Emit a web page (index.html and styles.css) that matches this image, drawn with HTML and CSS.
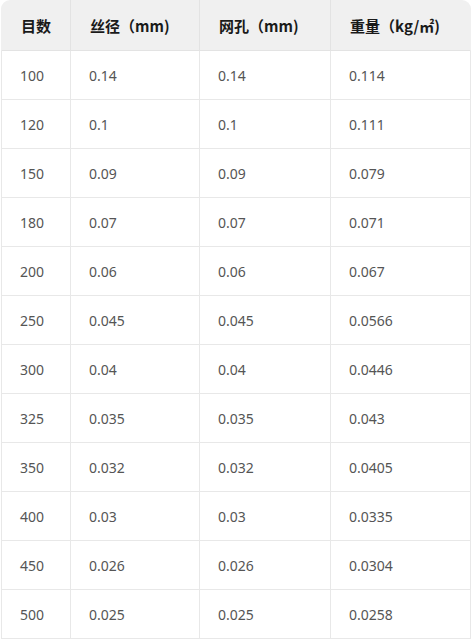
FILE: index.html
```html
<!DOCTYPE html>
<html lang="zh">
<head>
<meta charset="utf-8">
<link rel="stylesheet" href="styles.css">
</head>
<body>
<div class="wrap">
<table class="spec">
<colgroup><col class="c1"><col class="c2"><col class="c3"><col class="c4"></colgroup>
<thead>
<tr><th>目数</th><th>丝径（mm)</th><th>网孔（mm)</th><th>重量（kg/㎡)</th></tr>
</thead>
<tbody>
<tr><td>100</td><td>0.14</td><td>0.14</td><td>0.114</td></tr>
<tr><td>120</td><td>0.1</td><td>0.1</td><td>0.111</td></tr>
<tr><td>150</td><td>0.09</td><td>0.09</td><td>0.079</td></tr>
<tr><td>180</td><td>0.07</td><td>0.07</td><td>0.071</td></tr>
<tr><td>200</td><td>0.06</td><td>0.06</td><td>0.067</td></tr>
<tr><td>250</td><td>0.045</td><td>0.045</td><td>0.0566</td></tr>
<tr><td>300</td><td>0.04</td><td>0.04</td><td>0.0446</td></tr>
<tr><td>325</td><td>0.035</td><td>0.035</td><td>0.043</td></tr>
<tr><td>350</td><td>0.032</td><td>0.032</td><td>0.0405</td></tr>
<tr><td>400</td><td>0.03</td><td>0.03</td><td>0.0335</td></tr>
<tr><td>450</td><td>0.026</td><td>0.026</td><td>0.0304</td></tr>
<tr><td>500</td><td>0.025</td><td>0.025</td><td>0.0258</td></tr>
</tbody>
</table>
</div>
</body>
</html>
```
FILE: styles.css
```css
html, body {
  margin: 0;
  padding: 0;
  background: #fff;
}
.wrap {
  margin-left: 1px;
  width: 470px;
  border-radius: 9px 9px 0 0;
  overflow: hidden;
}
.spec {
  width: 470px;
  table-layout: fixed;
  border-collapse: separate;
  border-spacing: 0;
  font-family: "Noto Sans", "Noto Sans CJK SC", sans-serif;
}
.c1 { width: 70px; }
.c2 { width: 129px; }
.c3 { width: 131px; }
.c4 { width: 140px; }
.spec th {
  height: 51px;
  box-sizing: border-box;
  background: #f0f0f0;
  border-bottom: 1px solid #e3e3e3;
  border-right: 1px solid #e3e3e3;
  text-align: left;
  padding: 0 0 0 19px;
  font-size: 15px;
  font-weight: 700;
  color: #1a1a1a;
  font-family: "Noto Sans CJK SC", "Noto Sans", sans-serif;
}
.spec th:last-child { border-right: 1px solid transparent; }
.spec td {
  height: 49px;
  box-sizing: border-box;
  border-bottom: 1px solid #e8e8e8;
  border-right: 1px solid #e8e8e8;
  padding: 0 0 0 18px;
  font-size: 14px;
  color: #555;
}
.spec td:first-child { border-left: 1px solid #e8e8e8; padding-left: 18px; }
.spec th:first-child { border-left: 1px solid transparent; }
```
